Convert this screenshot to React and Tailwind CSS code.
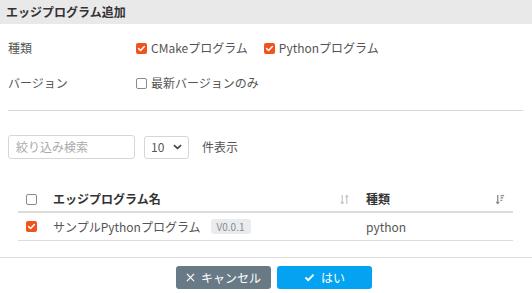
import React from 'react'

const Check = ({ checked }) => (
  <span
    className={`inline-flex items-center justify-center w-[11px] h-[11px] rounded-[2px] ${
      checked ? 'bg-[#f0531c]' : 'border border-[#8a8a8a] bg-white'
    }`}
  >
    {checked && (
      <svg viewBox="0 0 12 12" className="w-[9px] h-[9px]">
        <path d="M2.2 6.2 L4.8 8.6 L9.8 3.4" fill="none" stroke="white" strokeWidth="2" strokeLinecap="round" strokeLinejoin="round" />
      </svg>
    )}
  </span>
)

const Option = ({ checked, children }) => (
  <label className="flex items-center gap-[4px]">
    <Check checked={checked} />
    <span>{children}</span>
  </label>
)

const SortBoth = () => (
  <svg viewBox="0 0 10 12" className="w-[9px] h-[11px]" fill="none" stroke="#c8c8c8" strokeWidth="1.4">
    <path d="M2.5 1 V10.5 M0.8 8.6 L2.5 10.5 L4.2 8.6" />
    <path d="M7.5 11 V1.5 M5.8 3.4 L7.5 1.5 L9.2 3.4" />
  </svg>
)

const SortDesc = () => (
  <svg viewBox="0 0 10 12" className="w-[10px] h-[11px]" fill="none" stroke="#8c8c8c" strokeWidth="1.4">
    <path d="M2.5 1 V10.5 M0.8 8.6 L2.5 10.5 L4.2 8.6" />
    <path d="M5.5 1.7 H9.5 M5.5 4.3 H8.5 M5.5 6.9 H7.5" />
  </svg>
)

export default function App() {
  return (
    <div className="w-[532px] h-[293px] bg-white text-[12px] text-[#555] font-['Noto_Sans_CJK_JP','Noto_Sans',sans-serif] overflow-hidden flex flex-col">
      {/* header */}
      <div className="h-[24px] bg-[#e9e9e9] flex items-center px-[6px] font-bold text-[#333]">
        エッジプログラム追加
      </div>

      {/* filters */}
      <div className="px-[8px] pt-[14px]">
        <div className="flex items-center h-[20px]">
          <span className="w-[128px]">種類</span>
          <div className="flex items-center gap-[16px]">
            <Option checked>CMakeプログラム</Option>
            <Option checked>Pythonプログラム</Option>
          </div>
        </div>
        <div className="flex items-center h-[20px] mt-[15px]">
          <span className="w-[128px]">バージョン</span>
          <Option>最新バージョンのみ</Option>
        </div>
        <div className="h-px bg-[#d8d8d8] mt-[17px] w-[515px]" />
      </div>

      {/* search row */}
      <div className="flex items-center px-[8px] mt-[24px] gap-[9px]">
        <div className="w-[127px] h-[24px] border border-[#d6d6d6] rounded-[3px] flex items-center px-[7px] text-[#aaa]">
          絞り込み検索
        </div>
        <div className="w-[45px] h-[23px] border border-[#d6d6d6] rounded-[3px] flex items-center justify-between px-[6px]">
          <span>10</span>
          <svg viewBox="0 0 10 6" className="w-[9px] h-[6px]">
            <path d="M1 1 L5 4.6 L9 1" fill="none" stroke="#444" strokeWidth="1.8" />
          </svg>
        </div>
        <span className="ml-[4px]">件表示</span>
      </div>

      {/* table */}
      <div className="mx-[18px] mt-[28px] w-[495px]">
        <div className="flex items-center h-[26px] border-b-2 border-[#dcdcdc] font-bold text-[#333]">
          <div className="w-[35px] flex pl-[8px]"><Check /></div>
          <div className="w-[313px] flex items-center justify-between pr-[17px]">
            <span>エッジプログラム名</span>
            <SortBoth />
          </div>
          <div className="flex-1 flex items-center justify-between pr-[8px]">
            <span>種類</span>
            <SortDesc />
          </div>
        </div>
        <div className="flex items-center h-[28px] border-b border-[#dcdcdc]">
          <div className="w-[35px] flex pl-[8px]"><Check checked /></div>
          <div className="w-[313px] flex items-center gap-[10px]">
            <span>サンプルPythonプログラム</span>
            <span className="bg-[#e9ecef] text-[#8a8a8a] text-[10px] px-[6px] h-[15px] leading-[15px] rounded-[3px]">V0.0.1</span>
          </div>
          <div className="flex-1">python</div>
        </div>
      </div>

      {/* footer */}
      <div className="h-px bg-[#dedede] mt-[16px]" />
      <div className="flex justify-center gap-[6px] mt-[8px] pl-[16px]">
        <button className="w-[95px] h-[23px] rounded-[3px] bg-[#687a86] text-white flex items-center justify-center gap-[6px]">
          <svg viewBox="0 0 10 10" className="w-[9px] h-[9px]">
            <path d="M1 1 L9 9 M9 1 L1 9" stroke="white" strokeWidth="1.4" />
          </svg>
          キャンセル
        </button>
        <button className="w-[95px] h-[23px] rounded-[3px] bg-[#03a3f2] text-white flex items-center justify-center gap-[6px]">
          <svg viewBox="0 0 12 10" className="w-[11px] h-[9px]">
            <path d="M1.5 5 L4.6 8 L10.5 1.8" fill="none" stroke="white" strokeWidth="2.2" />
          </svg>
          はい
        </button>
      </div>
    </div>
  )
}
